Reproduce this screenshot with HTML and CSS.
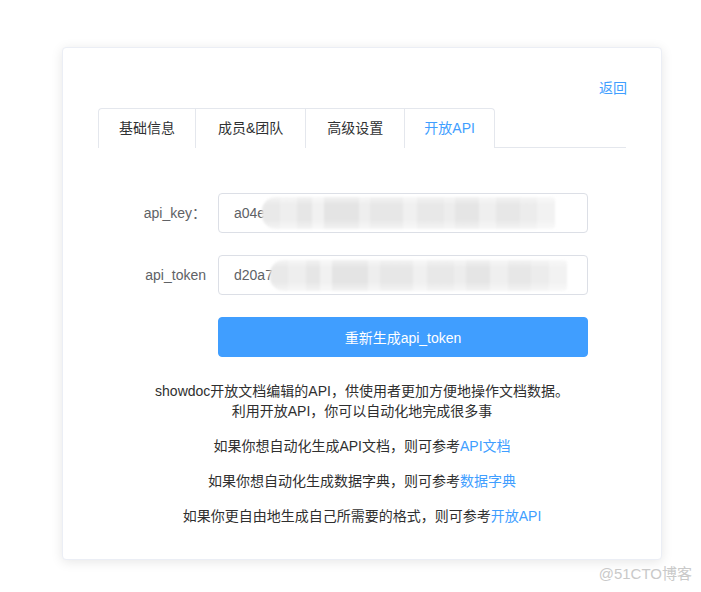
FILE: index.html
```html
<!DOCTYPE html>
<html lang="zh-CN">
<head>
    <meta charset="UTF-8">
    <meta name="viewport" content="width=device-width, initial-scale=1.0">
    <title>开放API</title>
    <link rel="stylesheet" href="styles.css">
</head>
<body>
    <!-- Settings card -->
    <div class="card">
        <div class="card-top">
            <a class="back-link" href="#">返回</a>
        </div>

        <!-- Tabs -->
        <div class="tabs">
            <div class="tab tab-info">基础信息</div>
            <div class="tab tab-member">成员&amp;团队</div>
            <div class="tab tab-advanced">高级设置</div>
            <div class="tab tab-api active">开放API</div>
        </div>

        <!-- Form -->
        <form class="api-form">
            <div class="form-item">
                <label class="form-label">api_key：</label>
                <div class="input-wrap">
                    <input class="form-input" type="text" value="a04e" readonly>
                    <span class="mask mask-key"></span>
                </div>
            </div>
            <div class="form-item">
                <label class="form-label">api_token</label>
                <div class="input-wrap">
                    <input class="form-input" type="text" value="d20a7" readonly>
                    <span class="mask mask-token"></span>
                </div>
            </div>
            <div class="form-item">
                <span class="form-label"></span>
                <button class="btn-primary" type="button">重新生成api_token</button>
            </div>
        </form>

        <!-- Help text -->
        <div class="tips">
            <p>showdoc开放文档编辑的API，供使用者更加方便地操作文档数据。<br>利用开放API，你可以自动化地完成很多事</p>
            <p>如果你想自动化生成API文档，则可参考<a href="#">API文档</a></p>
            <p>如果你想自动化生成数据字典，则可参考<a href="#">数据字典</a></p>
            <p>如果你更自由地生成自己所需要的格式，则可参考<a href="#">开放API</a></p>
        </div>
    </div>

    <div class="watermark">@51CTO博客</div>
</body>
</html>
```

FILE: styles.css
```css
body {
    margin: 0;
    background: #fff;
    font-family: "Liberation Sans", "Noto Sans CJK SC", sans-serif;
    font-size: 14px;
    color: #2f2f2f;
    position: relative;
    height: 592px;
}

a {
    color: #409eff;
    text-decoration: none;
}

/* Card */
.card {
    width: 528px;
    margin: 47px 0 0 62px;
    padding: 30px 35px 33px;
    border: 1px solid #ebeef5;
    border-radius: 4px;
    background: #fff;
    box-shadow: 0 2px 12px 0 rgba(0, 0, 0, 0.1);
}

.card-top {
    display: flex;
    justify-content: flex-end;
    line-height: 20px;
    margin-bottom: 10px;
}

.back-link {
    margin-right: -1px;
}

/* Tabs */
.tabs {
    display: flex;
    height: 39px;
    border-bottom: 1px solid #e4e7ed;
}

.tabs .tab {
    padding: 0 20px;
    line-height: 39px;
    height: 40px;
    box-sizing: border-box;
    color: #303133;
    border-top: 1px solid #e4e7ed;
    border-left: 1px solid #e4e7ed;
    background: #fff;
}

.tabs .tab-member {
    padding: 0 22px;
}

.tabs .tab-advanced {
    padding: 0 21px;
}

.tabs .tab-api {
    padding: 0 19px;
}

.tabs .tab:first-child {
    border-radius: 4px 0 0 0;
}

.tabs .tab:last-child {
    border-right: 1px solid #e4e7ed;
    border-radius: 0 4px 0 0;
}

.tabs .tab.active {
    color: #409eff;
}

/* Form */
.api-form {
    margin-top: 45px;
}

.form-item {
    display: flex;
    align-items: center;
    margin-bottom: 22px;
}

.form-label {
    width: 120px;
    box-sizing: border-box;
    padding-right: 12px;
    text-align: right;
    color: #606266;
    line-height: 40px;
}

.input-wrap {
    position: relative;
    width: 370px;
}

.form-input {
    display: block;
    width: 100%;
    height: 40px;
    box-sizing: border-box;
    padding: 0 15px;
    border: 1px solid #dcdfe6;
    border-radius: 4px;
    font-family: inherit;
    font-size: 14px;
    color: #606266;
    outline: none;
}

/* Blurred mosaic over the secret values */
.mask {
    position: absolute;
    border-radius: 14px 4px 4px 14px;
    filter: blur(1px);
    background:
        linear-gradient(180deg, rgba(255, 255, 255, 0.5), rgba(255, 255, 255, 0) 25%, rgba(255, 255, 255, 0) 70%, rgba(255, 255, 255, 0.55)),
        linear-gradient(90deg, #e9e9e9 0 6%, #eeeeee 6% 12%, #e6e6e6 12% 17%, #f1f1f1 17% 21%, #e4e4e4 21% 33%, #eeeeee 33% 37%, #e7e7e7 37% 48%, #f0f0f0 48% 53%, #e8e8e8 53% 62%, #ededed 62% 66%, #e5e5e5 66% 74%, #efefef 74% 80%, #e7e7e7 80% 88%, #ececec 88% 94%, #f2f2f2 94%);
}

.mask-key {
    left: 44px;
    top: 4px;
    width: 293px;
    height: 32px;
}

.mask-token {
    left: 52px;
    top: 5px;
    width: 297px;
    height: 31px;
}

.btn-primary {
    width: 370px;
    height: 40px;
    border: 1px solid #409eff;
    border-radius: 4px;
    background: #409eff;
    color: #fff;
    font-family: inherit;
    font-size: 14px;
    cursor: pointer;
}

/* Help text */
.tips {
    text-align: center;
    line-height: 20px;
    margin-top: 24px;
}

.tips p {
    margin: 0 0 15px;
}

.tips p:last-child {
    margin-bottom: 0;
}

.watermark {
    position: absolute;
    right: 9px;
    bottom: 9px;
    font-size: 15px;
    color: #c9c9c9;
}
```
